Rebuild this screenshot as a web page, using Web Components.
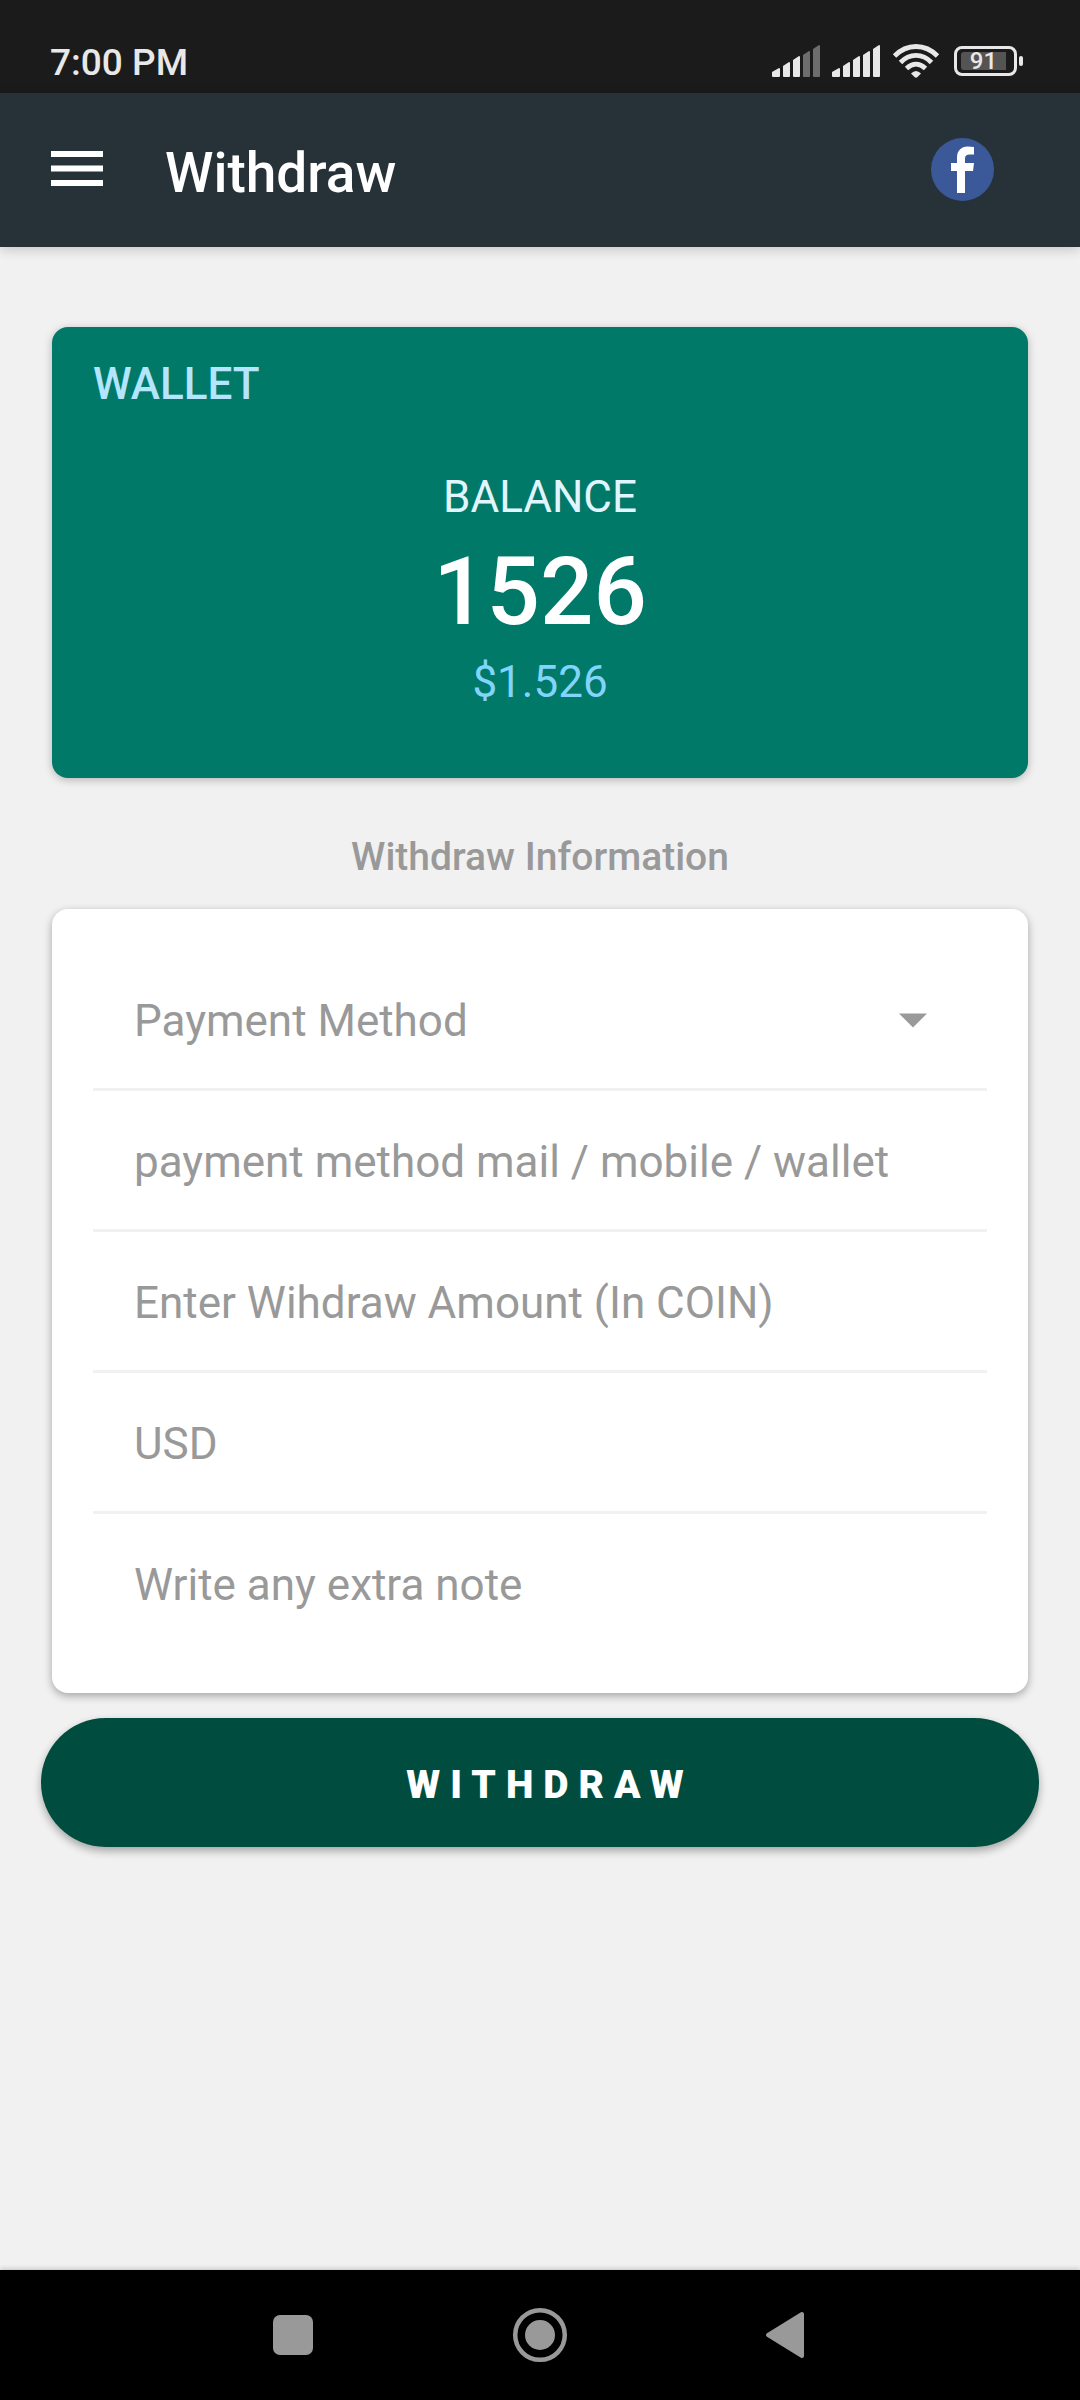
<!DOCTYPE html>
<html lang="en">
<head>
<meta charset="utf-8">
<meta name="viewport" content="width=device-width, initial-scale=1">
<title>Withdraw</title>
<style>
  body {
    margin: 0;
    min-height: 100vh;
    display: flex;
    flex-direction: column;
    background: #f1f1f1;
    font-family: Roboto, "Liberation Sans", sans-serif;
    font-size: 44px;
    line-height: 52px;
    --muted: #999;
    --line: #f1f1f1;
  }
  main { flex: 1; display: flex; flex-direction: column; padding: 80px 41px; }
  wallet-card, form-card { margin: 0 11px; }
  section-title { margin: 56px 0 29px; }
  pill-button { margin-top: 25px; }
</style>
</head>
<body>
<status-bar time="7:00 PM" battery="91"></status-bar>
<app-bar>Withdraw</app-bar>
<main>
  <wallet-card>
    <span slot="name">WALLET</span>
    <span slot="label">BALANCE</span>
    <span slot="coins">1526</span>
    <span slot="value">$1.526</span>
  </wallet-card>
  <section-title>Withdraw Information</section-title>
  <form-card>
    <select-row label="Payment Method"></select-row>
    <text-row label="payment method mail / mobile / wallet"></text-row>
    <text-row label="Enter Wihdraw Amount (In COIN)" mode="numeric"></text-row>
    <text-row label="USD" mode="decimal"></text-row>
    <text-row label="Write any extra note"></text-row>
  </form-card>
  <pill-button>WITHDRAW</pill-button>
</main>
<system-nav></system-nav>

<script>
  const define = (name, render) => customElements.define(name, class extends HTMLElement {
    constructor() {
      super();
      this.attachShadow({ mode: "open" }).innerHTML = render(this);
    }
  });

  const signal = (lit) => {
    const tops = [24, 18, 12, 7, 1];
    return `<svg width="48" height="34" viewBox="0 0 48 34" aria-hidden="true">${tops.map((t, i) => {
      const x = i * 10 + (i ? 1 : 0);
      const end = i * 10 + 8;
      return `<path d="M${x} ${t + 4}L${end - 1} ${t}Q${end} ${t} ${end} ${t + 1}V32Q${end} 33 ${end - 1} 33H${x + 1}Q${x} 33 ${x} 32Z" fill="${i < lit ? "#e8e8e8" : "#6d6d6d"}"/>`;
    }).join("")}</svg>`;
  };

  define("status-bar", (el) => `
    <style>
      :host { display: flex; align-items: center; justify-content: space-between; box-sizing: border-box;
        height: 93px; padding: 32px 57px 0 50px; background: #1b1b1b; color: #e8e8e8; }
      time { font-size: 37px; line-height: 44px; font-weight: 500; }
      .icons { display: flex; align-items: center; gap: 12px; padding-bottom: 4px; }
      .battery { display: flex; align-items: center; gap: 2px; margin-left: 2px; }
      .shell { box-sizing: border-box; width: 63px; height: 30px; border: 3px solid #e8e8e8; border-radius: 8px; padding: 3px 4px; display: flex; }
      .level { width: 45px; border-radius: 3px 0 0 3px; background: #545454; text-align: center;
        font-size: 24px; line-height: 19px; font-weight: 500; }
      .nub { width: 4px; height: 10px; border-radius: 2px; background: #e8e8e8; }
      svg { display: block; }
    </style>
    <time>${el.getAttribute("time")}</time>
    <div class="icons">
      ${signal(3)}${signal(5)}
      <svg width="48" height="36" viewBox="0 0 48 36" aria-hidden="true">
        <g fill="none" stroke="#e8e8e8" stroke-width="4.800">
          <path d="M2.500 13C15 0.300 33 0.300 45.500 13"/>
          <path d="M8.500 19.500C17.500 10 30.500 10 39.500 19.500"/>
          <path d="M14.500 25.500C20.500 19.800 27.500 19.800 33.500 25.500"/>
        </g>
        <path d="M19 30.500Q24 25.500 29 30.500L25.500 34Q24 35.500 22.500 34Z" fill="#e8e8e8"/>
      </svg>
      <div class="battery"><div class="shell"><span class="level">${el.getAttribute("battery")}</span></div><span class="nub"></span></div>
    </div>`);

  define("app-bar", () => `
    <style>
      :host { display: flex; align-items: center; height: 154px; padding: 0 85px 0 51px; background: #273238; color: #fff;
        box-shadow: 0 2px 12px rgba(0,0,0,.2); }
      button, a { display: block; padding: 0; border: 0; background: none; cursor: pointer; }
      h1 { flex: 1; margin: 0 0 0 62px; padding-top: 6px; font-size: 55px; line-height: 64px; font-weight: 500; }
      svg { display: block; }
    </style>
    <button type="button" aria-label="Open menu">
      <svg width="52" height="38" viewBox="0 0 52 38"><path d="M0 0H52V6H0ZM0 14.500H52V20.500H0ZM0 29H52V35H0Z" fill="#fff"/></svg>
    </button>
    <h1><slot></slot></h1>
    <a href="#facebook" aria-label="Facebook">
      <svg width="64" height="64" viewBox="0 0 64 64">
        <circle cx="31.500" cy="31.500" r="31.500" fill="#3b5998"/>
        <path d="M26 55V33H20V25H26V19.500C26 12.500 30.500 8.500 36.500 8.500L43 9V16.500H38.500C35.500 16.500 34 18 34 20.500V25H43L42 33H34V55Z" fill="#fff"/>
      </svg>
    </a>`);

  define("wallet-card", () => `
    <style>
      :host { display: flex; flex-direction: column; align-items: center; padding: 31px 41px 70px;
        border-radius: 16px; background: #017969; box-shadow: 0 2px 8px rgba(0,0,0,.25); }
      .name { align-self: flex-start; color: #b3e5fc; font-weight: 500; }
      .label { margin-top: 61px; color: #e1f5fe; }
      .coins { margin: 14px 0 9px; color: #fff; font-size: 94px; line-height: 110px; font-weight: 500; }
      .value { color: #81d4fa; }
    </style>
    <div class="name"><slot name="name"></slot></div>
    <div class="label"><slot name="label"></slot></div>
    <div class="coins"><slot name="coins"></slot></div>
    <div class="value"><slot name="value"></slot></div>`);

  define("section-title", () => `
    <style>
      :host { display: block; text-align: center; color: var(--muted); }
      h2 { margin: 0; font-size: 39px; line-height: 46px; font-weight: 500; }
    </style>
    <h2><slot></slot></h2>`);

  define("form-card", () => `
    <style>
      :host { display: flex; flex-direction: column; padding: 41px; border-radius: 16px; background: #fff;
        box-shadow: 0 3px 8px rgba(0,0,0,.32); }
      ::slotted(:not(:last-child)) { border-bottom: 3px solid var(--line); }
    </style>
    <slot></slot>`);

  define("text-row", (el) => `
    <style>
      :host { display: block; }
      input { display: block; box-sizing: border-box; width: 100%; height: 138px; margin: 0; padding: 4px 41px 0; border: 0;
        background: none; font: inherit; color: #333; outline: none; }
      input::placeholder { color: var(--muted); opacity: 1; }
    </style>
    <input type="text" inputmode="${el.getAttribute("mode") || "text"}" placeholder="${el.getAttribute("label")}" aria-label="${el.getAttribute("label")}">`);

  define("select-row", (el) => `
    <style>
      :host { display: grid; align-items: center; }
      select, svg { grid-area: 1 / 1; }
      select { appearance: none; box-sizing: border-box; width: 100%; height: 138px; margin: 0; padding: 4px 107px 0 41px; border: 0;
        background: none; font: inherit; color: var(--muted); outline: none; }
      svg { justify-self: end; margin-right: 41px; pointer-events: none; }
    </style>
    <select aria-label="${el.getAttribute("label")}"><option>${el.getAttribute("label")}</option></select>
    <svg width="66" height="66" viewBox="0 0 66 66" aria-hidden="true"><path d="M19 27.500H47L33 41.500Z" fill="#999"/></svg>`);

  define("pill-button", () => `
    <style>
      :host { display: block; }
      button { display: block; width: 100%; height: 129px; padding: 4px 0 0 20px; border: 0; border-radius: 65px;
        background: #004d3f; color: #fff; font: 900 39px/46px Roboto, "Liberation Sans", sans-serif; letter-spacing: 10px;
        box-shadow: 0 4px 8px rgba(0,0,0,.32); cursor: pointer; }
    </style>
    <button type="button"><slot></slot></button>`);

  define("system-nav", () => `
    <style>
      :host { display: grid; grid-template-columns: repeat(3, 1fr); height: 130px; padding: 0 170px; background: #000;
        box-shadow: 0 -1px 5px rgba(0,0,0,.2); }
      button { display: grid; place-items: center; padding: 0; border: 0; background: none; cursor: pointer; }
    </style>
    <button type="button" aria-label="Recent apps">
      <svg width="56" height="56" viewBox="0 0 56 56"><rect x="8" y="8" width="40" height="40" rx="7" fill="#999"/></svg>
    </button>
    <button type="button" aria-label="Home">
      <svg width="56" height="56" viewBox="0 0 56 56"><circle cx="28" cy="28" r="24.800" fill="none" stroke="#999" stroke-width="4.500"/><circle cx="28" cy="28" r="15" fill="#999"/></svg>
    </button>
    <button type="button" aria-label="Back">
      <svg width="56" height="56" viewBox="0 0 56 56"><path d="M9 28L43 7V49Z" fill="#999" stroke="#999" stroke-width="4" stroke-linejoin="round"/></svg>
    </button>`);
</script>
</body>
</html>
